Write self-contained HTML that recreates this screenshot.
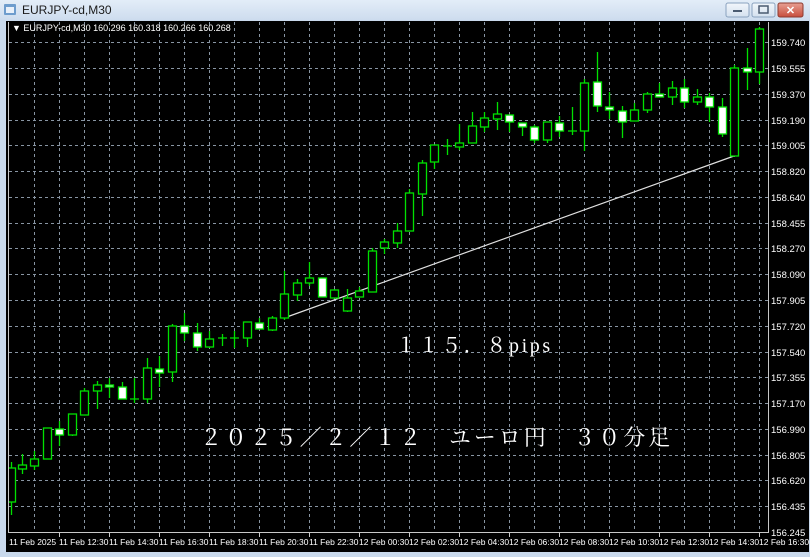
<!DOCTYPE html>
<html><head><meta charset="utf-8"><style>
html,body{margin:0;padding:0;width:810px;height:557px;overflow:hidden;background:#c9d9ec;}
svg{position:absolute;left:0;top:0;}
text{font-family:"Liberation Sans",sans-serif;}
</style></head><body>
<svg width="810" height="557" viewBox="0 0 810 557" xmlns="http://www.w3.org/2000/svg">
<defs>
<linearGradient id="tb" x1="0" y1="0" x2="0" y2="1"><stop offset="0" stop-color="#e3edf8"/><stop offset="1" stop-color="#cddcee"/></linearGradient>
<linearGradient id="cb" x1="0" y1="0" x2="0" y2="1"><stop offset="0" stop-color="#e8a093"/><stop offset="1" stop-color="#c74d3c"/></linearGradient>
<linearGradient id="bb" x1="0" y1="0" x2="0" y2="1"><stop offset="0" stop-color="#f2f6fb"/><stop offset="1" stop-color="#d4e1ef"/></linearGradient>
<clipPath id="plot"><rect x="9" y="22" width="759" height="510"/></clipPath>
</defs>
<rect x="0" y="0" width="810" height="557" fill="#c9d9ec"/>
<rect x="0" y="0" width="810" height="20" fill="url(#tb)"/>
<rect x="4" y="4" width="12" height="11" fill="#6d9ccd" rx="1"/>
<rect x="6" y="7" width="8" height="6" fill="#e8f0fa"/>
<text x="22" y="14" font-size="12" fill="#1a1a1a">EURJPY-cd,M30</text>
<rect x="726" y="3" width="23" height="14" rx="2" fill="url(#bb)" stroke="#8aa2bf"/>
<rect x="733" y="10" width="9" height="2" fill="#4a5a70"/>
<rect x="752" y="3" width="23" height="14" rx="2" fill="url(#bb)" stroke="#8aa2bf"/>
<rect x="759" y="6" width="9" height="7" fill="none" stroke="#4a5a70" stroke-width="1.5"/>
<rect x="778" y="3" width="25" height="14" rx="2" fill="url(#cb)" stroke="#8d3a30"/>
<text x="790.5" y="14" font-size="11" font-weight="bold" fill="#fff" text-anchor="middle">✕</text>
<rect x="6" y="21" width="803" height="531" fill="#000"/>
<g stroke="#8895a3" stroke-width="1" stroke-dasharray="3,3" fill="none">
<path d="M34.5 22V532M59.5 22V532M84.5 22V532M109.5 22V532M134.5 22V532M159.5 22V532M184.5 22V532M209.5 22V532M234.5 22V532M259.5 22V532M284.5 22V532M309.5 22V532M334.5 22V532M359.5 22V532M384.5 22V532M409.5 22V532M434.5 22V532M459.5 22V532M484.5 22V532M509.5 22V532M534.5 22V532M559.5 22V532M584.5 22V532M609.5 22V532M634.5 22V532M659.5 22V532M684.5 22V532M709.5 22V532M734.5 22V532M759.5 22V532"/>
<path d="M9 42.5H768M9 68.5H768M9 94.5H768M9 120.5H768M9 145.5H768M9 171.5H768M9 197.5H768M9 223.5H768M9 248.5H768M9 274.5H768M9 300.5H768M9 326.5H768M9 352.5H768M9 377.5H768M9 403.5H768M9 429.5H768M9 455.5H768M9 480.5H768M9 506.5H768"/>
</g>
<path d="M8.5 22V532.5H768.5V22" stroke="#c8c8c8" fill="none"/>
<text x="12" y="31" font-size="9" fill="#fff">▼ EURJPY-cd,M30  160.296 160.318 160.266 160.268</text>
<g font-size="9.5" fill="#fff">
<text x="771" y="46">159.740</text><text x="771" y="72">159.555</text><text x="771" y="98">159.370</text><text x="771" y="124">159.190</text><text x="771" y="149">159.005</text><text x="771" y="175">158.820</text><text x="771" y="201">158.640</text><text x="771" y="227">158.455</text><text x="771" y="252">158.270</text><text x="771" y="278">158.090</text><text x="771" y="304">157.905</text><text x="771" y="330">157.720</text><text x="771" y="356">157.540</text><text x="771" y="381">157.355</text><text x="771" y="407">157.170</text><text x="771" y="433">156.990</text><text x="771" y="459">156.805</text><text x="771" y="484">156.620</text><text x="771" y="510">156.435</text><text x="771" y="536">156.245</text>
</g>
<g stroke="#c8c8c8"><path d="M59.5 532V537M109.5 532V537M159.5 532V537M209.5 532V537M259.5 532V537M309.5 532V537M359.5 532V537M409.5 532V537M459.5 532V537M509.5 532V537M559.5 532V537M609.5 532V537M659.5 532V537M709.5 532V537M759.5 532V537"/></g>
<g font-size="8.5" fill="#fff">
<text x="9" y="545">11 Feb 2025</text><text x="59" y="545">11 Feb 12:30</text><text x="109" y="545">11 Feb 14:30</text><text x="159" y="545">11 Feb 16:30</text><text x="209" y="545">11 Feb 18:30</text><text x="259" y="545">11 Feb 20:30</text><text x="309" y="545">11 Feb 22:30</text><text x="359" y="545">12 Feb 00:30</text><text x="409" y="545">12 Feb 02:30</text><text x="459" y="545">12 Feb 04:30</text><text x="509" y="545">12 Feb 06:30</text><text x="559" y="545">12 Feb 08:30</text><text x="609" y="545">12 Feb 10:30</text><text x="659" y="545">12 Feb 12:30</text><text x="709" y="545">12 Feb 14:30</text><text x="759" y="545">12 Feb 16:30</text>
</g>
<g clip-path="url(#plot)">
<line x1="284" y1="318" x2="734" y2="156" stroke="#e0e0e0" stroke-width="1.2"/>
<g stroke="#00e000" stroke-width="1.3">
<path d="M11.5 462V515M22.5 454V474M34.5 451V470M47.5 428V459M59.5 421V446M72.5 414V436M84.5 388V415M97.5 381V409M109.5 378V398M122.5 382V399M134.5 378V403M130 399H139M147.5 358V403M159.5 356V387M172.5 324V382M184.5 313V341M197.5 323V351M209.5 331V348M222.5 334V346M218 338H227M234.5 331V348M230 338H239M247.5 322V347M259.5 318V329M272.5 316V331M284.5 271V320M297.5 279V301M309.5 262V286M322.5 278V297M334.5 289V298M347.5 289V312M359.5 287V297M372.5 248V292M384.5 239V254M397.5 223V248M409.5 189V231M422.5 160V216M434.5 145V169M447.5 139V155M443 146H452M459.5 124V150M472.5 112V143M484.5 112V132M497.5 102V130M509.5 115V132M522.5 123V136M534.5 125V143M547.5 122V143M559.5 116V137M572.5 107V135M568 131H577M584.5 79V151M597.5 52V112M609.5 92V119M622.5 106V138M634.5 103V121M647.5 92V113M659.5 83V97M672.5 81V105M684.5 79V108M697.5 89V105M709.5 93V122M722.5 98V137M734.5 65V156M747.5 48V90M759.5 27V84"/>
</g>
<g stroke="#00e000" stroke-width="1.3" fill="#000">
<rect x="7.5" y="468" width="8" height="34"/><rect x="18.5" y="465" width="8" height="4"/><rect x="30.5" y="459" width="8" height="7"/><rect x="43.5" y="428" width="8" height="31"/><rect x="68.5" y="414" width="8" height="21"/><rect x="80.5" y="391" width="8" height="24"/><rect x="93.5" y="385" width="8" height="6"/><rect x="143.5" y="368" width="8" height="31"/><rect x="168.5" y="326" width="8" height="46"/><rect x="205.5" y="339" width="8" height="8"/><rect x="243.5" y="322" width="8" height="16"/><rect x="268.5" y="318" width="8" height="12"/><rect x="280.5" y="294" width="8" height="24"/><rect x="293.5" y="283" width="8" height="12"/><rect x="305.5" y="278" width="8" height="5"/><rect x="330.5" y="290" width="8" height="8"/><rect x="343.5" y="298" width="8" height="13"/><rect x="355.5" y="291" width="8" height="6"/><rect x="368.5" y="251" width="8" height="41"/><rect x="380.5" y="242" width="8" height="6"/><rect x="393.5" y="231" width="8" height="12"/><rect x="405.5" y="193" width="8" height="38"/><rect x="418.5" y="163" width="8" height="31"/><rect x="430.5" y="145" width="8" height="17"/><rect x="455.5" y="143" width="8" height="4"/><rect x="468.5" y="126" width="8" height="17"/><rect x="480.5" y="118" width="8" height="9"/><rect x="493.5" y="114" width="8" height="5"/><rect x="543.5" y="122" width="8" height="18"/><rect x="580.5" y="83" width="8" height="48"/><rect x="630.5" y="110" width="8" height="11"/><rect x="643.5" y="94" width="8" height="16"/><rect x="668.5" y="88" width="8" height="9"/><rect x="693.5" y="97" width="8" height="5"/><rect x="730.5" y="68" width="8" height="88"/><rect x="755.5" y="29" width="8" height="43"/>
</g>
<g stroke="#00e000" stroke-width="1.3" fill="#fff">
<rect x="55.5" y="429" width="8" height="6"/><rect x="105.5" y="385" width="8" height="2"/><rect x="118.5" y="387" width="8" height="12"/><rect x="155.5" y="369" width="8" height="4"/><rect x="180.5" y="326" width="8" height="7"/><rect x="193.5" y="333" width="8" height="14"/><rect x="255.5" y="323" width="8" height="6"/><rect x="318.5" y="278" width="8" height="19"/><rect x="505.5" y="115" width="8" height="7"/><rect x="518.5" y="123" width="8" height="4"/><rect x="530.5" y="127" width="8" height="13"/><rect x="555.5" y="123" width="8" height="8"/><rect x="593.5" y="82" width="8" height="24"/><rect x="605.5" y="107" width="8" height="3"/><rect x="618.5" y="111" width="8" height="11"/><rect x="655.5" y="94" width="8" height="3"/><rect x="680.5" y="88" width="8" height="14"/><rect x="705.5" y="97" width="8" height="10"/><rect x="718.5" y="107" width="8" height="27"/><rect x="743.5" y="68" width="8" height="4"/>
</g>
</g>
<text x="396" y="352" font-size="20" fill="#fff" letter-spacing="2.6" style="font-family:'Liberation Serif','Noto Serif CJK SC',serif">１１５．８pips</text>
<text x="200" y="445" font-size="22" fill="#fff" letter-spacing="2.9" style="font-family:'Liberation Serif','Noto Serif CJK SC',serif">２０２５／２／１２　ユーロ円　３０分足</text>
</svg>
</body></html>
